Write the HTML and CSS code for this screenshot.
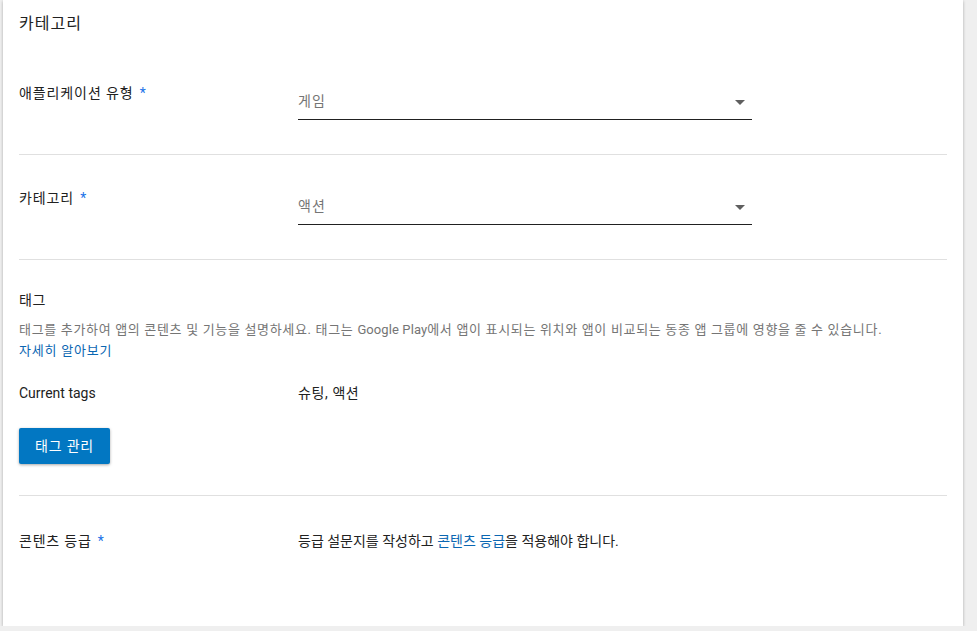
FILE: index.html
```html
<!DOCTYPE html>
<html lang="ko">
<head>
<meta charset="utf-8">
<title>카테고리</title>
<link rel="stylesheet" href="styles.css">
</head>
<body>
<div class="card">
  <section class="sec sec-first">
    <h2 class="title">카테고리</h2>
    <div class="row">
      <div class="label">애플리케이션 유형<span class="req">*</span></div>
      <div class="select">
        <span class="value">게임</span>
        <span class="arrow"></span>
      </div>
    </div>
  </section>
  <section class="sec">
    <div class="row">
      <div class="label">카테고리<span class="req">*</span></div>
      <div class="select">
        <span class="value">액션</span>
        <span class="arrow"></span>
      </div>
    </div>
  </section>
  <section class="sec sec-tags">
    <h3 class="subtitle">태그</h3>
    <p class="desc">태그를 추가하여 앱의 콘텐츠 및 기능을 설명하세요. 태그는 <span class="latin">Google Play</span>에서 앱이 표시되는 위치와 앱이 비교되는 동종 앱 그룹에 영향을 줄 수 있습니다.<br><a class="link more" href="#">자세히 알아보기</a></p>
    <div class="info-row">
      <div class="info-label">Current tags</div>
      <div class="info-value tags">슈팅, 액션</div>
    </div>
    <button class="btn" type="button">태그 관리</button>
  </section>
  <section class="sec sec-last">
    <div class="info-row">
      <div class="info-label label-ko">콘텐츠 등급<span class="req">*</span></div>
      <div class="info-value">등급 설문지를 작성하고 <a class="link" href="#">콘텐츠 등급</a>을 적용해야 합니다.</div>
    </div>
  </section>
</div>
</body>
</html>
```

FILE: styles.css
```css
html, body {
  margin: 0;
  padding: 0;
  background: #efefef;
}
body {
  font-family: Roboto, "Noto Sans CJK KR", sans-serif;
  color: #212121;
  font-size: 14px;
  line-height: 20px;
}
.card {
  width: 960px;
  height: 626px;
  margin-left: 3px;
  padding: 0 16px;
  box-sizing: border-box;
  background: #fff;
  box-shadow: 0 1px 3px rgba(0,0,0,0.28);
}
.sec {
  border-bottom: 1px solid #e0e0e0;
  padding: 32px 0 34px;
}
.sec-first {
  padding-top: 14px;
}
.sec-last {
  border-bottom: none;
  padding-top: 35px;
}
.title {
  margin: 0 0 48px;
  font-size: 16px;
  font-weight: 400;
  line-height: 20px;
  letter-spacing: 1px;
  color: #212121;
}
.row {
  display: flex;
  align-items: flex-start;
}
.label {
  width: 279px;
  padding-top: 1px;
  letter-spacing: 0.9px;
  color: #212121;
}
.req {
  color: #1a73e8;
  margin-left: 6px;
  letter-spacing: 0;
}
.select {
  width: 454px;
  height: 38px;
  box-sizing: border-box;
  border-bottom: 1px solid #212121;
  display: flex;
  align-items: flex-start;
  justify-content: space-between;
  padding: 9px 7px 0 0;
}
.value {
  color: #757575;
  letter-spacing: 1px;
}
.arrow {
  width: 0;
  height: 0;
  margin-top: 9px;
  border-left: 5px solid transparent;
  border-right: 5px solid transparent;
  border-top: 5px solid #5f5f5f;
}
.sec-tags {
  padding-top: 30px;
  padding-bottom: 31px;
}
.subtitle {
  margin: 0;
  font-size: 14px;
  font-weight: 400;
  line-height: 20px;
  letter-spacing: 0.6px;
  color: #212121;
}
.desc {
  margin: 9px 0 0;
  font-size: 13px;
  line-height: 21px;
  letter-spacing: 0.67px;
  color: #757575;
}
.latin {
  letter-spacing: 0.1px;
}
.link {
  color: #0b67b2;
  text-decoration: none;
}
.more {
  letter-spacing: 0.8px;
}
.info-row {
  display: flex;
  align-items: flex-start;
}
.sec-tags .info-row {
  margin-top: 22px;
}
.info-label {
  width: 279px;
  color: #212121;
}
.label-ko {
  letter-spacing: 0.8px;
}
.info-value {
  color: #212121;
}
.tags {
  letter-spacing: 0.6px;
}
.btn {
  margin-top: 25px;
  height: 36px;
  padding: 0 16px;
  border: none;
  border-radius: 2px;
  background: #0277c2;
  color: #fff;
  font-family: Roboto, "Noto Sans CJK KR", sans-serif;
  font-size: 14px;
  line-height: 36px;
  letter-spacing: 0.8px;
  box-shadow: 0 1px 3px rgba(0,0,0,0.35);
  display: block;
  cursor: pointer;
}
```
